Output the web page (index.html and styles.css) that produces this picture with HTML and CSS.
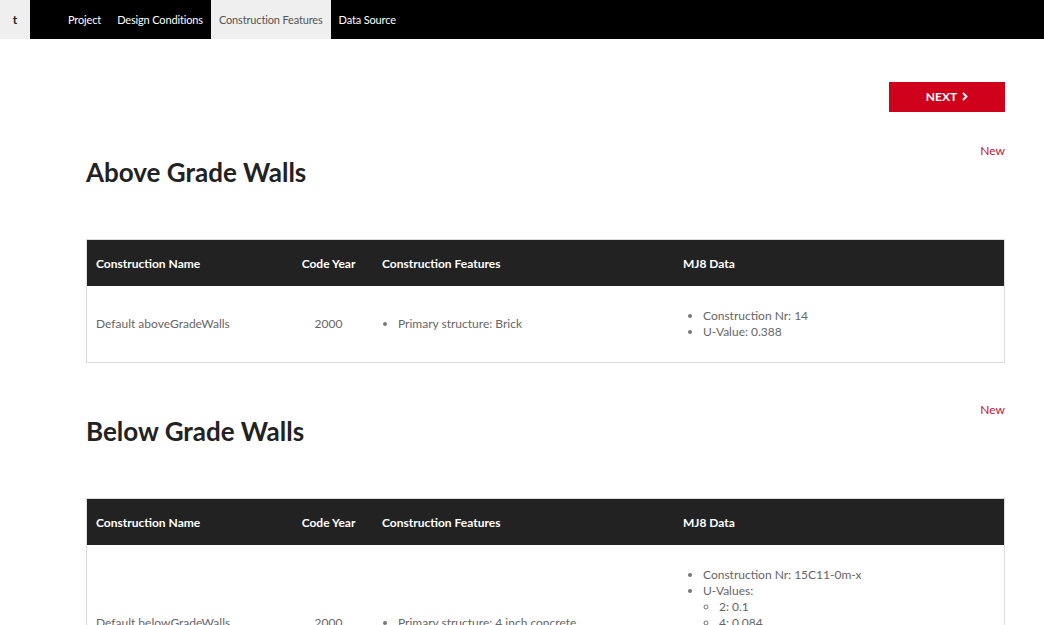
FILE: index.html
```html
<!DOCTYPE html>
<html lang="en">
<head>
    <meta charset="UTF-8">
    <meta name="viewport" content="width=device-width, initial-scale=1.0">
    <title>Construction Features</title>
    <link rel="stylesheet" href="styles.css">
</head>
<body>
    <nav class="topbar">
        <a class="brand" href="#">t</a>
        <a class="nav-link" href="#">Project</a>
        <a class="nav-link" href="#">Design Conditions</a>
        <a class="nav-link active" href="#">Construction Features</a>
        <a class="nav-link" href="#">Data Source</a>
    </nav>

    <main class="page">
        <div class="actions">
            <button class="btn-next">NEXT
                <svg class="chev" width="6" height="9" viewBox="0 0 6 9"><path d="M1 1 L4.5 4.5 L1 8" fill="none" stroke="#fff" stroke-width="1.8"/></svg>
            </button>
        </div>

        <section class="block">
            <div class="block-head">
                <h2>Above Grade Walls</h2>
                <a class="new-link" href="#">New</a>
            </div>
            <table class="grid">
                <thead>
                    <tr>
                        <th class="c-name">Construction Name</th>
                        <th class="c-year">Code Year</th>
                        <th class="c-feat">Construction Features</th>
                        <th class="c-mj8">MJ8 Data</th>
                    </tr>
                </thead>
                <tbody>
                    <tr>
                        <td class="c-name">Default aboveGradeWalls</td>
                        <td class="c-year">2000</td>
                        <td class="c-feat">
                            <ul><li>Primary structure: Brick</li></ul>
                        </td>
                        <td class="c-mj8">
                            <ul>
                                <li>Construction Nr: 14</li>
                                <li>U-Value: 0.388</li>
                            </ul>
                        </td>
                    </tr>
                </tbody>
            </table>
        </section>

        <section class="block">
            <div class="block-head">
                <h2>Below Grade Walls</h2>
                <a class="new-link" href="#">New</a>
            </div>
            <table class="grid">
                <thead>
                    <tr>
                        <th class="c-name">Construction Name</th>
                        <th class="c-year">Code Year</th>
                        <th class="c-feat">Construction Features</th>
                        <th class="c-mj8">MJ8 Data</th>
                    </tr>
                </thead>
                <tbody>
                    <tr>
                        <td class="c-name">Default belowGradeWalls</td>
                        <td class="c-year">2000</td>
                        <td class="c-feat">
                            <ul><li>Primary structure: 4 inch concrete</li></ul>
                        </td>
                        <td class="c-mj8">
                            <ul>
                                <li>Construction Nr: 15C11-0m-x</li>
                                <li>U-Values:
                                    <ul>
                                        <li>2: 0.1</li>
                                        <li>4: 0.084</li>
                                        <li>6: 0.072</li>
                                        <li>8: 0.063</li>
                                        <li>10: 0.056</li>
                                    </ul>
                                </li>
                            </ul>
                        </td>
                    </tr>
                </tbody>
            </table>
        </section>
    </main>
</body>
</html>
```

FILE: styles.css
```css
body{
    margin: 0px;
    background: #fff;
    font-family: Lato, "Open Sans", Arial, sans-serif;
    color: #222;
}

/* top navigation */
.topbar{
    display: flex;
    align-items: stretch;
    height: 39px;
    background: #000;
}
.brand{
    width: 30px;
    display: flex;
    align-items: center;
    justify-content: center;
    background: #efefef;
    color: #222;
    font-size: 12px;
    font-weight: 700;
    text-decoration: none;
    margin-right: 30px;
}
.nav-link{
    display: flex;
    align-items: center;
    padding: 0px 8px;
    color: #fff;
    font-size: 11px;
    letter-spacing: -0.15px;
    text-decoration: none;
}
.nav-link.active{
    background: #efefef;
    color: #555;
}

/* page */
.page{
    width: 919px;
    margin-left: 86px;
    padding-bottom: 40px;
}
.actions{
    display: flex;
    justify-content: flex-end;
    margin-top: 43px;
}
.btn-next{
    width: 116px;
    height: 30px;
    display: flex;
    align-items: center;
    justify-content: center;
    gap: 5px;
    padding: 0px 0px 2px 0px;
    border: none;
    background: #d0021b;
    color: #fff;
    font-family: inherit;
    font-size: 12px;
    font-weight: 700;
    cursor: pointer;
}

.block{
    margin-top: 30px;
}
.block + .block{
    margin-top: 38px;
}
.block-head{
    display: flex;
    justify-content: space-between;
    align-items: flex-start;
}
.block-head h2{
    margin: 14px 0px 0px 0px;
    font-size: 26px;
    line-height: 32px;
    font-weight: 700;
    color: #222;
}
.new-link{
    color: #c8102e;
    font-size: 12px;
    line-height: 18px;
    text-decoration: none;
}

/* tables */
.grid{
    width: 100%;
    margin-top: 51px;
    border-collapse: collapse;
    border: 1px solid #ddd;
    font-size: 12px;
}
.grid th{
    height: 46px;
    padding: 0px 10px;
    background: #222;
    color: #fff;
    font-weight: 700;
    text-align: left;
    vertical-align: middle;
}
.grid td{
    padding: 10px 10px;
    color: #666;
    vertical-align: middle;
    line-height: 16px;
}
.grid .c-name{ width: 179px; padding-left: 9px; }
.grid .c-year{ width: 67px; text-align: center; }
.grid .c-feat{ width: 281px; }

.grid ul{
    margin: 12px 0px;
    padding-left: 16px;
}
.grid .c-mj8 ul{
    padding-left: 20px;
}
.grid ul ul{
    margin: 0px;
    list-style: circle;
}
.grid .c-mj8 ul ul{
    padding-left: 16px;
}
.grid li::marker{
    color: #777;
}
```
